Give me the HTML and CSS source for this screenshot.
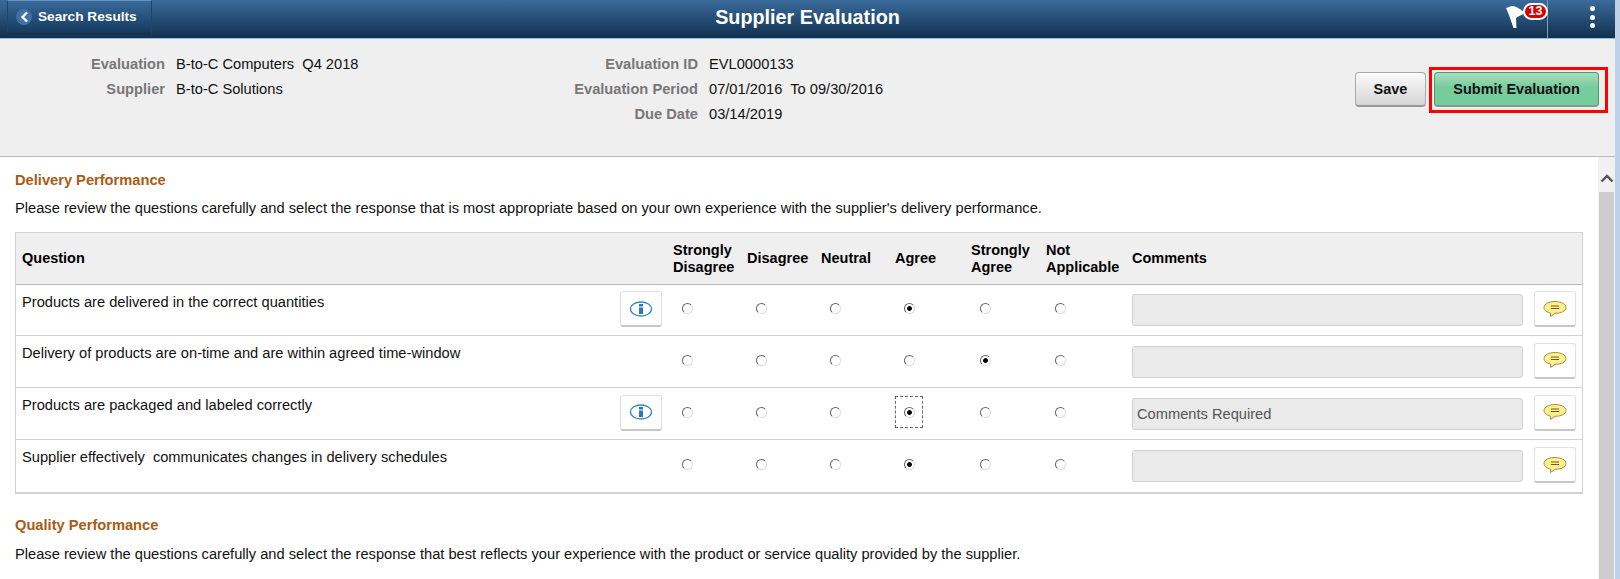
FILE: index.html

```html
<!DOCTYPE html>
<html lang="en">
<head>
    <meta charset="UTF-8">
    <meta name="viewport" content="width=device-width, initial-scale=1.0">
    <title>Supplier Evaluation</title>
    <link rel="stylesheet" href="styles.css">
</head>
<body>
    <div class="page">
        <header class="banner">
            <a class="back-button" href="#">
                <span class="back-circle">
                    <svg width="9" height="12" viewBox="0 0 9 12"><path d="M7 1.500 2.500 6 7 10.500" fill="none" stroke="#fff" stroke-width="2.400"/></svg>
                </span>
                Search Results
            </a>
            <h1 class="banner-title">Supplier Evaluation</h1>
            <div class="banner-tools">
                <div class="flag">
                    <svg width="22" height="24" viewBox="0 0 22 24"><path d="M0 3C3 2 6 0 9 1.500C13 3 16 6 20 7.500C16 10 12 11 10 13L10.500 23H7.500L3 10Z" fill="#fff"/></svg>
                    <span class="badge">13</span>
                </div>
                <div class="menu-dots"><i></i><i></i><i></i></div>
            </div>
        </header>

        <section class="summary">
            <div class="fields fields-left">
                <div class="field"><span class="field-label">Evaluation</span><span class="field-value">B-to-C Computers&nbsp; Q4 2018</span></div>
                <div class="field"><span class="field-label">Supplier</span><span class="field-value">B-to-C Solutions</span></div>
            </div>
            <div class="fields fields-right">
                <div class="field"><span class="field-label">Evaluation ID</span><span class="field-value">EVL0000133</span></div>
                <div class="field"><span class="field-label">Evaluation Period</span><span class="field-value">07/01/2016&nbsp; To 09/30/2016</span></div>
                <div class="field"><span class="field-label">Due Date</span><span class="field-value">03/14/2019</span></div>
            </div>
            <div class="actions">
                <button class="btn btn-save">Save</button>
                <div class="highlight">
                    <button class="btn btn-submit">Submit Evaluation</button>
                </div>
            </div>
        </section>

        <div class="body-area">
            <main class="content">
                <h2 class="section-title">Delivery Performance</h2>
                <p class="section-text">Please review the questions carefully and select the response that is most appropriate based on your own experience with the supplier's delivery performance.</p>

                <table class="survey">
                    <colgroup>
                        <col class="col-question">
                        <col class="col-info">
                        <col class="col-opt">
                        <col class="col-opt">
                        <col class="col-opt">
                        <col class="col-opt-b">
                        <col class="col-opt-c">
                        <col class="col-opt-d">
                        <col class="col-comment">
                        <col class="col-note">
                    </colgroup>
                    <thead>
                        <tr>
                            <th>Question</th>
                            <th></th>
                            <th>Strongly<br>Disagree</th>
                            <th>Disagree</th>
                            <th>Neutral</th>
                            <th>Agree</th>
                            <th>Strongly<br>Agree</th>
                            <th>Not<br>Applicable</th>
                            <th>Comments</th>
                            <th></th>
                        </tr>
                    </thead>
                    <tbody>
                        <tr>
                            <td class="question">Products are delivered in the correct quantities</td>
                            <td>
                                <button class="icon-btn"><svg width="24" height="18" viewBox="0 0 24 18"><ellipse cx="12" cy="9" rx="10.500" ry="7" fill="none" stroke="#3b85bd" stroke-width="1.300"/><rect x="10" y="4" width="4" height="2.500" fill="#2a78b5"/><rect x="10" y="7.500" width="4" height="6.500" fill="#2a78b5"/></svg></button>
                            </td>
                            <td class="opt"><input type="radio" name="q1"></td>
                            <td class="opt"><input type="radio" name="q1"></td>
                            <td class="opt"><input type="radio" name="q1"></td>
                            <td class="opt"><input type="radio" name="q1" checked></td>
                            <td class="opt"><input type="radio" name="q1"></td>
                            <td class="opt"><input type="radio" name="q1"></td>
                            <td><div class="comment-box"></div></td>
                            <td class="note">
                                <button class="icon-btn"><svg width="24" height="18" viewBox="0 0 24 18"><path d="M12 1.500C6 1.500 1 4 1 7.500C1 10.500 4.500 12.500 7.500 13L7.500 16.500L12 13.300C18 13.300 23 11 23 7.500C23 4 18 1.500 12 1.500Z" fill="#fff08a" stroke="#a68a52"/><path d="M8 6H16M8 8.500H16" stroke="#6b5a30" fill="none"/></svg></button>
                            </td>
                        </tr>
                        <tr>
                            <td class="question">Delivery of products are on-time and are within agreed time-window</td>
                            <td></td>
                            <td class="opt"><input type="radio" name="q2"></td>
                            <td class="opt"><input type="radio" name="q2"></td>
                            <td class="opt"><input type="radio" name="q2"></td>
                            <td class="opt"><input type="radio" name="q2"></td>
                            <td class="opt"><input type="radio" name="q2" checked></td>
                            <td class="opt"><input type="radio" name="q2"></td>
                            <td><div class="comment-box"></div></td>
                            <td class="note">
                                <button class="icon-btn"><svg width="24" height="18" viewBox="0 0 24 18"><path d="M12 1.500C6 1.500 1 4 1 7.500C1 10.500 4.500 12.500 7.500 13L7.500 16.500L12 13.300C18 13.300 23 11 23 7.500C23 4 18 1.500 12 1.500Z" fill="#fff08a" stroke="#a68a52"/><path d="M8 6H16M8 8.500H16" stroke="#6b5a30" fill="none"/></svg></button>
                            </td>
                        </tr>
                        <tr>
                            <td class="question">Products are packaged and labeled correctly</td>
                            <td>
                                <button class="icon-btn"><svg width="24" height="18" viewBox="0 0 24 18"><ellipse cx="12" cy="9" rx="10.500" ry="7" fill="none" stroke="#3b85bd" stroke-width="1.300"/><rect x="10" y="4" width="4" height="2.500" fill="#2a78b5"/><rect x="10" y="7.500" width="4" height="6.500" fill="#2a78b5"/></svg></button>
                            </td>
                            <td class="opt"><input type="radio" name="q3"></td>
                            <td class="opt"><input type="radio" name="q3"></td>
                            <td class="opt"><input type="radio" name="q3"></td>
                            <td class="opt"><span class="focus-box"><input type="radio" name="q3" checked></span></td>
                            <td class="opt"><input type="radio" name="q3"></td>
                            <td class="opt"><input type="radio" name="q3"></td>
                            <td><div class="comment-box">Comments Required</div></td>
                            <td class="note">
                                <button class="icon-btn"><svg width="24" height="18" viewBox="0 0 24 18"><path d="M12 1.500C6 1.500 1 4 1 7.500C1 10.500 4.500 12.500 7.500 13L7.500 16.500L12 13.300C18 13.300 23 11 23 7.500C23 4 18 1.500 12 1.500Z" fill="#fff08a" stroke="#a68a52"/><path d="M8 6H16M8 8.500H16" stroke="#6b5a30" fill="none"/></svg></button>
                            </td>
                        </tr>
                        <tr>
                            <td class="question">Supplier effectively&nbsp; communicates changes in delivery schedules</td>
                            <td></td>
                            <td class="opt"><input type="radio" name="q4"></td>
                            <td class="opt"><input type="radio" name="q4"></td>
                            <td class="opt"><input type="radio" name="q4"></td>
                            <td class="opt"><input type="radio" name="q4" checked></td>
                            <td class="opt"><input type="radio" name="q4"></td>
                            <td class="opt"><input type="radio" name="q4"></td>
                            <td><div class="comment-box"></div></td>
                            <td class="note">
                                <button class="icon-btn"><svg width="24" height="18" viewBox="0 0 24 18"><path d="M12 1.500C6 1.500 1 4 1 7.500C1 10.500 4.500 12.500 7.500 13L7.500 16.500L12 13.300C18 13.300 23 11 23 7.500C23 4 18 1.500 12 1.500Z" fill="#fff08a" stroke="#a68a52"/><path d="M8 6H16M8 8.500H16" stroke="#6b5a30" fill="none"/></svg></button>
                            </td>
                        </tr>
                    </tbody>
                </table>

                <h2 class="section-title section-second">Quality Performance</h2>
                <p class="section-text section-text-second">Please review the questions carefully and select the response that best reflects your experience with the product or service quality provided by the supplier.</p>
            </main>
            <aside class="scrollbar">
                <svg class="scroll-up" width="14" height="9" viewBox="0 0 14 9"><path d="M1.500 7.500 7 2 12.500 7.500" fill="none" stroke="#555" stroke-width="2.400"/></svg>
                <div class="scroll-thumb"></div>
            </aside>
        </div>
    </div>
</body>
</html>
```

FILE: styles.css

```css
html, body {
    height: 100%;
    margin: 0;
    overflow: hidden;
}

body {
    background: #bdd2e8;
    font-family: "Liberation Sans", Arial, sans-serif;
    font-size: 14.67px;
    color: #111;
}

.page {
    width: 1615px;
    height: 579px;
    display: flex;
    flex-direction: column;
    background: #fff;
}

/* top banner */
.banner {
    height: 38px;
    flex: none;
    display: flex;
    align-items: flex-start;
    position: relative;
    background: linear-gradient(to bottom, #3b6b9b, #10304f);
    border-bottom: 1px solid #9dbbdc;
}

.back-button {
    width: 145px;
    height: 34px;
    margin-left: 7px;
    box-sizing: border-box;
    display: flex;
    align-items: center;
    gap: 6px;
    padding: 0 0 1px 8px;
    border: 1px solid #1f4468;
    border-top-color: #6a94bd;
    border-bottom-color: #0f2c49;
    border-radius: 0 0 4px 4px;
    color: #fff;
    font-size: 13.67px;
    font-weight: bold;
    text-decoration: none;
    background: linear-gradient(to bottom, #39699a, #153a5e);
}

.back-circle {
    width: 16px;
    height: 16px;
    border-radius: 50%;
    background: #3f72a6;
    display: flex;
    align-items: center;
    justify-content: center;
}

.banner-title {
    position: absolute;
    left: 0;
    right: 0;
    top: 6px;
    margin: 0;
    text-align: center;
    color: #fff;
    font-size: 19.8px;
    line-height: 22px;
    font-weight: bold;
}

.banner-tools {
    margin-left: auto;
    display: flex;
    height: 100%;
}

.flag {
    width: 42px;
    height: 38px;
    box-sizing: border-box;
    position: relative;
    border-right: 1px solid #7f9dbb;
}

.flag svg {
    position: absolute;
    left: 0;
    top: 5px;
}

.badge {
    position: absolute;
    left: 17px;
    top: 3px;
    width: 25px;
    height: 17px;
    box-sizing: border-box;
    border: 2px solid #fff;
    border-radius: 9px;
    background: #d90000;
    color: #fff;
    font-size: 12.5px;
    font-weight: bold;
    line-height: 13px;
    text-align: center;
}

.menu-dots {
    width: 67px;
    display: flex;
    flex-direction: column;
    align-items: center;
    gap: 3.500px;
    padding: 6px 0 0 22px;
    box-sizing: border-box;
}

.menu-dots i {
    width: 5px;
    height: 5px;
    border-radius: 50%;
    background: #fff;
}

/* summary block */
.summary {
    height: 118px;
    flex: none;
    box-sizing: border-box;
    display: flex;
    position: relative;
    background: #efefef;
    border-bottom: 1px solid #bbb;
}

.fields {
    padding-top: 13px;
}

.fields-left {
    width: 560px;
}

.fields-right {
    flex: 1;
}

.field {
    display: flex;
    height: 25px;
    line-height: 25px;
}

.field-label {
    text-align: right;
    color: #777;
    font-weight: bold;
    margin-right: 11px;
}

.fields-left .field-label {
    width: 165px;
}

.fields-right .field-label {
    width: 138px;
}

.actions {
    position: absolute;
    right: 7px;
    top: 28px;
    display: flex;
    align-items: flex-start;
    gap: 3px;
}

.btn {
    height: 35px;
    box-sizing: border-box;
    font-family: inherit;
    font-size: 14.5px;
    font-weight: bold;
    color: #111;
    border-radius: 4px;
    cursor: pointer;
}

.btn-save {
    width: 71px;
    margin-top: 5px;
    border: 1px solid #aaa;
    border-bottom: 2px solid #999;
    background: linear-gradient(to bottom, #fbfbfb, #d5d5d5);
}

.highlight {
    border: 3px solid #f00;
    padding: 2px 6px 3px 2px;
}

.btn-submit {
    display: block;
    width: 165px;
    border: 1px solid #4b9a70;
    border-bottom: 2px solid #7f9c8c;
    background: linear-gradient(to bottom, #a8dfc0, #76cc9c 45%);
}

/* main area */
.body-area {
    flex: 1;
    display: flex;
    min-height: 0;
}

.content {
    flex: 1;
    padding: 0 15px;
    overflow: hidden;
}

.section-title {
    margin: 15px 0 0;
    font-size: 14.67px;
    line-height: 17px;
    font-weight: bold;
    color: #a85c14;
}

.section-second {
    margin-top: 23px;
}

.section-text {
    margin: 11px 0 0;
    line-height: 17px;
}

.section-text-second {
    margin-top: 12px;
}

.survey {
    margin-top: 15px;
    width: 1568px;
    table-layout: fixed;
    border-collapse: separate;
    border-spacing: 0;
    border: 1px solid #d2d2d2;
    border-bottom-width: 2px;
}

.col-question { width: 604px; }
.col-info { width: 53px; }
.col-opt { width: 74px; }
.col-opt-b { width: 76px; }
.col-opt-c { width: 75px; }
.col-opt-d { width: 86px; }
.col-comment { width: 396px; }
.col-note { width: 54px; }

.survey th {
    height: 52px;
    padding: 0;
    box-sizing: border-box;
    background: #efefef;
    border-bottom: 1px solid #bbb;
    text-align: left;
    font-size: 14.5px;
    line-height: 17px;
    color: #000;
}

.survey th:first-child {
    padding-left: 6px;
}

.survey td {
    height: 52px;
    padding: 0;
    box-sizing: border-box;
    border-bottom: 1px solid #d2d2d2;
    vertical-align: middle;
}

.survey tbody tr:first-child td {
    height: 51px;
}

.survey tbody tr:last-child td {
    border-bottom: 0;
}

.survey td.question {
    vertical-align: top;
    padding: 9px 0 0 6px;
    line-height: 17px;
}

.survey td.opt {
    padding-left: 9px;
}

input[type="radio"] {
    appearance: none;
    display: block;
    width: 11px;
    height: 11px;
    margin: 0 0 3px;
    border: 1px solid #666;
    border-right-color: #ddd;
    border-bottom-color: #ddd;
    border-radius: 50%;
    background: #fff;
    box-sizing: border-box;
}

input[type="radio"]:checked {
    background: radial-gradient(circle, #000 2px, #fff 2.800px);
}

.focus-box {
    display: flex;
    width: 28px;
    height: 32px;
    margin: 0 0 3px -9px;
    box-sizing: border-box;
    align-items: center;
    justify-content: center;
    border: 1px dashed #666;
}

.focus-box input[type="radio"] {
    margin: 0;
}

.comment-box {
    width: 391px;
    height: 32px;
    box-sizing: border-box;
    padding-left: 4px;
    line-height: 30px;
    background: #eaeaea;
    border: 1px solid #d0d0d0;
    border-radius: 3px;
    color: #555;
}

.icon-btn {
    width: 42px;
    height: 36px;
    margin-bottom: 2px;
    padding: 0;
    box-sizing: border-box;
    display: flex;
    align-items: center;
    justify-content: center;
    background: #fff;
    border: 1px solid #e2e2e2;
    border-bottom: 2px solid #c8c8c8;
    border-radius: 3px;
}

.note .icon-btn {
    margin-left: 6px;
}

/* fake scrollbar on the right */
.scrollbar {
    width: 17px;
    flex: none;
    background: #f1f1f1;
    display: flex;
    flex-direction: column;
    align-items: center;
    padding-top: 17px;
    box-sizing: border-box;
}

.scroll-up {
    flex: none;
}

.scroll-thumb {
    width: 15px;
    flex: 1;
    margin-top: 9px;
    background: #cdcdcd;
}
```
